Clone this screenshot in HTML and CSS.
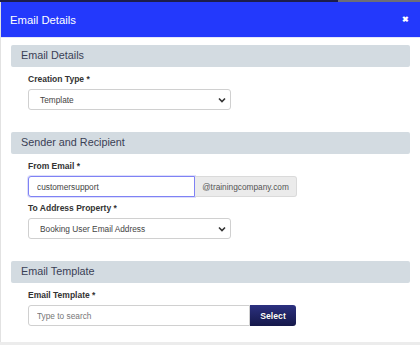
FILE: index.html
```html
<!DOCTYPE html>
<html lang="en">
<head>
    <meta charset="UTF-8">
    <meta name="viewport" content="width=device-width, initial-scale=1.0">
    <title>Email Details</title>
    <link rel="stylesheet" href="styles.css">
</head>
<body>
    <div class="topbar">
        <div class="topbar-dark"></div>
        <div class="topbar-grey"></div>
    </div>
    <div class="modal">
        <div class="modal-header">
            <h1>Email Details</h1>
            <span class="close">&#x2716;</span>
        </div>
        <div class="modal-body">
            <div class="section">
                <h2 class="section-title">Email Details</h2>
                <div class="fields">
                    <div class="form-group">
                        <label>Creation Type *</label>
                        <div class="select">
                            <span>Template</span>
                            <svg class="chevron" width="8" height="6" viewBox="0 0 8 6"><path d="M1 1.5 L4 4.5 L7 1.5" fill="none" stroke="#333" stroke-width="1.6"/></svg>
                        </div>
                    </div>
                </div>
            </div>

            <div class="section">
                <h2 class="section-title">Sender and Recipient</h2>
                <div class="fields">
                    <div class="form-group">
                        <label>From Email *</label>
                        <div class="input-group">
                            <input type="text" class="input input-focus" value="customersupport">
                            <span class="addon">@trainingcompany.com</span>
                        </div>
                    </div>
                    <div class="form-group">
                        <label>To Address Property *</label>
                        <div class="select">
                            <span>Booking User Email Address</span>
                            <svg class="chevron" width="8" height="6" viewBox="0 0 8 6"><path d="M1 1.5 L4 4.5 L7 1.5" fill="none" stroke="#333" stroke-width="1.6"/></svg>
                        </div>
                    </div>
                </div>
            </div>

            <div class="section">
                <h2 class="section-title">Email Template</h2>
                <div class="fields">
                    <div class="form-group">
                        <label>Email Template *</label>
                        <div class="input-group">
                            <input type="text" class="input input-search" placeholder="Type to search">
                            <button class="btn-select">Select</button>
                        </div>
                    </div>
                </div>
            </div>
        </div>
    </div>
    <div class="footer-strip"></div>
</body>
</html>
```

FILE: styles.css
```css
body {
    font-family: "Liberation Sans", Arial, sans-serif;
    margin: 0;
    padding: 0;
    background-color: #ffffff;
    width: 420px;
    height: 345px;
    overflow: hidden;
    display: flex;
    flex-direction: column;
}

.topbar {
    display: flex;
    height: 2px;
    flex-shrink: 0;
}

.topbar-dark {
    flex: 1;
    background-color: #1c1d4c;
}

.topbar-grey {
    width: 82px;
    background-color: #6d6e78;
}

.modal {
    flex: 1;
    min-height: 0;
    overflow: hidden;
    display: flex;
    flex-direction: column;
    border-left: 1px solid #e2e2e2;
}

.modal-header {
    flex-shrink: 0;
    height: 35px;
    background-color: #2339fc;
    display: flex;
    align-items: center;
    justify-content: space-between;
    padding: 0 11px 0 9px;
    border-bottom: 1px solid #e4e6fb;
}

.modal-header h1 {
    margin: 0;
    font-size: 11.3px;
    font-weight: normal;
    color: #ffffff;
}

.close {
    color: #ffffff;
    font-size: 8px;
    font-weight: bold;
    margin-top: -1px;
}

.modal-body {
    flex-shrink: 0;
    padding: 7px 10px 0 10px;
}

.section {
    margin-bottom: 22px;
}

.section-title {
    margin: 0;
    height: 22px;
    line-height: 21px;
    padding-left: 10px;
    background-color: #d3dbe1;
    border-radius: 2px;
    font-size: 10.8px;
    font-weight: normal;
    color: #3a4055;
}

.fields {
    padding: 6px 0 0 17px;
}

.form-group {
    margin-bottom: 5px;
}

.form-group label {
    display: block;
    font-size: 8.5px;
    font-weight: bold;
    line-height: 12px;
    color: #333333;
    margin-bottom: 4px;
}

.select {
    position: relative;
    width: 203px;
    height: 21px;
    box-sizing: border-box;
    border: 1px solid #d0d0d0;
    border-radius: 3px;
    display: flex;
    align-items: center;
    padding-left: 11px;
    font-size: 8.3px;
    color: #444444;
}

.chevron {
    position: absolute;
    right: 4px;
    top: 7px;
}

.input-group {
    display: flex;
    height: 21px;
}

.input {
    height: 21px;
    box-sizing: border-box;
    border: 1px solid #d0d0d0;
    border-radius: 3px 0 0 3px;
    padding: 0 0 0 8px;
    font-family: "Liberation Sans", Arial, sans-serif;
    font-size: 8.3px;
    color: #444444;
    outline: none;
}

.input::placeholder {
    color: #777777;
}

.input-focus {
    width: 167px;
    border-color: #7f82f4;
    box-shadow: 0 0 0 1px rgba(120, 125, 245, 0.25);
}

.input-search {
    width: 222px;
}

.addon {
    width: 102px;
    box-sizing: border-box;
    background-color: #ebebeb;
    border: 1px solid #dadada;
    border-left: none;
    border-radius: 0 3px 3px 0;
    display: flex;
    align-items: center;
    justify-content: center;
    font-size: 8.3px;
    color: #555555;
}

.btn-select {
    width: 46px;
    height: 21px;
    border: none;
    border-radius: 0 3px 3px 0;
    background: linear-gradient(#2c3180, #15184a);
    color: #ffffff;
    font-family: "Liberation Sans", Arial, sans-serif;
    font-size: 8.7px;
    font-weight: bold;
    text-shadow: 0 0 1px rgba(0, 0, 0, 0.5);
    padding: 0;
}

.footer-strip {
    flex-shrink: 0;
    height: 3px;
    background-color: #ececec;
}
```
